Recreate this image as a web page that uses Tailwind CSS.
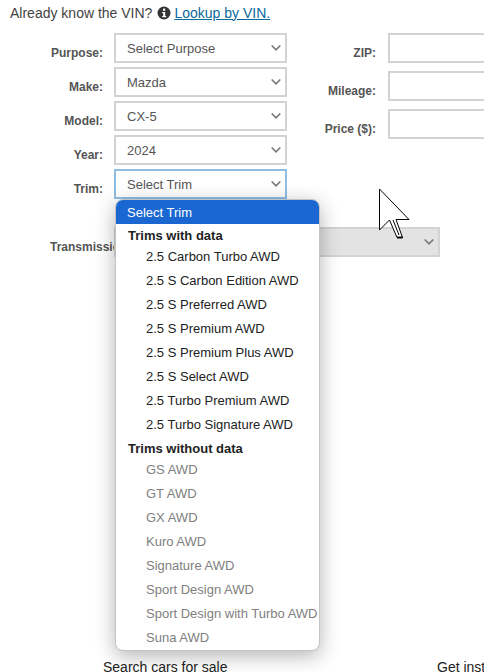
<!DOCTYPE html>
<html lang="en">
<head>
  <meta charset="UTF-8" />
  <title>Trim lookup</title>
  <script src="https://cdn.jsdelivr.net/npm/@tailwindcss/browser@4"></script>
</head>
<body class="bg-white font-['Liberation_Sans',Arial,sans-serif] overflow-hidden">
  <div class="relative w-[484px] h-[672px] overflow-hidden">
    <p class="flex items-center h-[26px] pl-[10px] text-[14px] text-[#444]">
      Already know the VIN?
      <svg class="ml-[5px] mr-[3px] w-[14px] h-[14px]" viewBox="0 0 14 14"><circle cx="7" cy="7" r="6.5" fill="#333"/><rect x="6" y="2.6" width="2.2" height="2.2" fill="#fff"/><path d="M5.2 6h3v4h1v1.3H5.2V10h1V7.2h-1z" fill="#fff"/></svg>
      <a class="text-[#0b6a9a] underline">Lookup by VIN.</a>
    </p>

    <div class="flex mt-[7px]">
      <div class="w-[287px] flex flex-col gap-[4px]">
        <div class="flex items-center">
          <label class="w-[103px] pt-[10px] text-right text-[12px] font-bold text-[#555]">Purpose:</label>
          <div class="ml-[11px] w-[173px] h-[30px] border-2 border-[#d3d3d3] flex items-center justify-between pl-[11px] pr-[4px] pt-[2px] text-[13px] text-[#555]">Select Purpose
            <svg class="w-[10px] h-[8px] mb-[2px]" viewBox="0 0 10 8"><path d="M0.7 1.5l4.3 4.3 4.3-4.3" fill="none" stroke="#777" stroke-width="1.6"/></svg>
          </div>
        </div>
        <div class="flex items-center">
          <label class="w-[103px] pt-[10px] text-right text-[12px] font-bold text-[#555]">Make:</label>
          <div class="ml-[11px] w-[173px] h-[30px] border-2 border-[#d3d3d3] flex items-center justify-between pl-[11px] pr-[4px] pt-[2px] text-[13px] text-[#555]">Mazda
            <svg class="w-[10px] h-[8px] mb-[2px]" viewBox="0 0 10 8"><path d="M0.7 1.5l4.3 4.3 4.3-4.3" fill="none" stroke="#777" stroke-width="1.6"/></svg>
          </div>
        </div>
        <div class="flex items-center">
          <label class="w-[103px] pt-[10px] text-right text-[12px] font-bold text-[#555]">Model:</label>
          <div class="ml-[11px] w-[173px] h-[30px] border-2 border-[#d3d3d3] flex items-center justify-between pl-[11px] pr-[4px] pt-[2px] text-[13px] text-[#555]">CX-5
            <svg class="w-[10px] h-[8px] mb-[2px]" viewBox="0 0 10 8"><path d="M0.7 1.5l4.3 4.3 4.3-4.3" fill="none" stroke="#777" stroke-width="1.6"/></svg>
          </div>
        </div>
        <div class="flex items-center">
          <label class="w-[103px] pt-[10px] text-right text-[12px] font-bold text-[#555]">Year:</label>
          <div class="ml-[11px] w-[173px] h-[30px] border-2 border-[#d3d3d3] flex items-center justify-between pl-[11px] pr-[4px] pt-[2px] text-[13px] text-[#555]">2024
            <svg class="w-[10px] h-[8px] mb-[2px]" viewBox="0 0 10 8"><path d="M0.7 1.5l4.3 4.3 4.3-4.3" fill="none" stroke="#777" stroke-width="1.6"/></svg>
          </div>
        </div>
        <div class="flex items-center">
          <label class="w-[103px] pt-[10px] text-right text-[12px] font-bold text-[#555]">Trim:</label>
          <div class="ml-[11px] w-[173px] h-[30px] border-2 border-[#8fbde3] flex items-center justify-between pl-[11px] pr-[4px] pt-[2px] text-[13px] text-[#555]">Select Trim
            <svg class="w-[10px] h-[8px] mb-[2px]" viewBox="0 0 10 8"><path d="M0.7 1.5l4.3 4.3 4.3-4.3" fill="none" stroke="#777" stroke-width="1.6"/></svg>
          </div>
        </div>
      </div>

      <div class="flex-1 flex flex-col gap-[8px]">
        <div class="flex items-center">
          <label class="w-[89px] pt-[10px] text-right text-[12px] font-bold text-[#555]">ZIP:</label>
          <div class="ml-[12px] w-[120px] h-[30px] border-2 border-[#d3d3d3]"></div>
        </div>
        <div class="flex items-center">
          <label class="w-[89px] pt-[10px] text-right text-[12px] font-bold text-[#555]">Mileage:</label>
          <div class="ml-[12px] w-[120px] h-[30px] border-2 border-[#d3d3d3]"></div>
        </div>
        <div class="flex items-center">
          <label class="w-[89px] pt-[10px] text-right text-[12px] font-bold text-[#555]">Price ($):</label>
          <div class="ml-[12px] w-[120px] h-[30px] border-2 border-[#d3d3d3]"></div>
        </div>
      </div>
    </div>

    <div class="flex items-center mt-[28px]">
      <label class="ml-[50px] w-[64px] pt-[10px] whitespace-nowrap text-[12px] font-bold text-[#555]">Transmission</label>
      <div class="w-[326px] h-[30px] bg-[#e3e3e3] border-2 border-[#d3d3d3] flex items-center justify-end pr-[4px]">
        <svg class="w-[10px] h-[8px]" viewBox="0 0 10 8"><path d="M0.7 1.5l4.3 4.3 4.3-4.3" fill="none" stroke="#777" stroke-width="1.6"/></svg>
      </div>
    </div>

    <div class="flex mt-[400px] text-[14px] text-[#222]">
      <span class="ml-[103px] w-[334px] shrink-0">Search cars for sale</span>
      <span class="whitespace-nowrap">Get instant offers</span>
    </div>

    <!-- open trim dropdown -->
    <div class="absolute left-[115px] top-[199px] w-[205px] h-[452px] bg-white border border-[#c4c4c4] rounded-[8px] shadow-[0_5px_20px_rgba(0,0,0,0.3)] overflow-hidden text-[13px] leading-[24px] whitespace-nowrap">
      <div class="h-[24px] leading-[26px] bg-[#1a67d2] text-white pl-[11px]">Select Trim</div>
      <div class="pl-[12px] h-[21px] leading-[24px] font-bold text-[#222]">Trims with data</div>
      <div class="text-[#222]">
        <div class="pl-[30px]">2.5 Carbon Turbo AWD</div>
        <div class="pl-[30px]">2.5 S Carbon Edition AWD</div>
        <div class="pl-[30px]">2.5 S Preferred AWD</div>
        <div class="pl-[30px]">2.5 S Premium AWD</div>
        <div class="pl-[30px]">2.5 S Premium Plus AWD</div>
        <div class="pl-[30px]">2.5 S Select AWD</div>
        <div class="pl-[30px]">2.5 Turbo Premium AWD</div>
        <div class="pl-[30px]">2.5 Turbo Signature AWD</div>
      </div>
      <div class="pl-[12px] h-[21px] leading-[24px] font-bold text-[#222]">Trims without data</div>
      <div class="text-[#808080]">
        <div class="pl-[30px]">GS AWD</div>
        <div class="pl-[30px]">GT AWD</div>
        <div class="pl-[30px]">GX AWD</div>
        <div class="pl-[30px]">Kuro AWD</div>
        <div class="pl-[30px]">Signature AWD</div>
        <div class="pl-[30px]">Sport Design AWD</div>
        <div class="pl-[30px]">Sport Design with Turbo AWD</div>
        <div class="pl-[30px]">Suna AWD</div>
      </div>
    </div>

    <!-- mouse cursor -->
    <svg class="absolute left-[379px] top-[188px] w-[32px] h-[52px]" viewBox="0 0 32 52"><path d="M0.5 1V42L10.5 32L18 49.5H23.5L17 31.5H30Z" fill="#fff" stroke="#000" stroke-width="1"/><path d="M18 49.5H23.5" stroke="#000" stroke-width="2"/><path d="M14 32L20 47" stroke="#000" stroke-width="1"/></svg>
  </div>
</body>
</html>
